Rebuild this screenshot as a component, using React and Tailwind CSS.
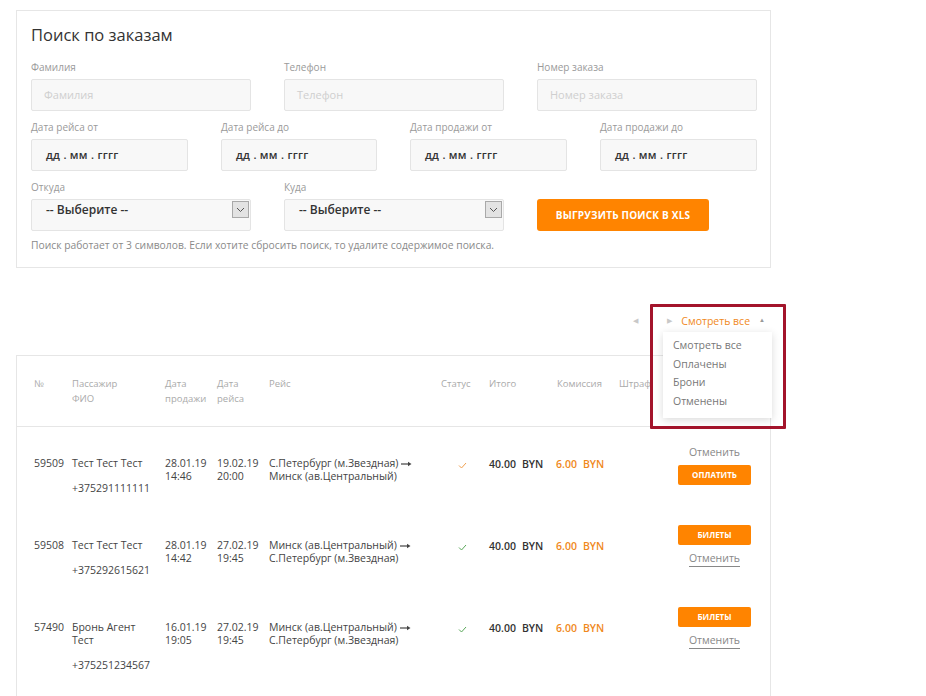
import React from 'react';

const font = { fontFamily: '"Open Sans", "Liberation Sans", sans-serif' };

const rows = [
  {
    id: '59509',
    name: ['Тест Тест Тест'],
    phone: '+375291111111',
    sale: ['28.01.19', '14:46'],
    flight: ['19.02.19', '20:00'],
    route: ['С.Петербург (м.Звездная) →', 'Минск (ав.Центральный)'],
    paid: false,
  },
  {
    id: '59508',
    name: ['Тест Тест Тест'],
    phone: '+375292615621',
    sale: ['28.01.19', '14:42'],
    flight: ['27.02.19', '19:45'],
    route: ['Минск (ав.Центральный) →', 'С.Петербург (м.Звездная)'],
    paid: true,
  },
  {
    id: '57490',
    name: ['Бронь Агент', 'Тест'],
    phone: '+375251234567',
    sale: ['16.01.19', '19:05'],
    flight: ['27.02.19', '19:45'],
    route: ['Минск (ав.Центральный) →', 'С.Петербург (м.Звездная)'],
    paid: true,
  },
];

const Label = ({ children }) => (
  <div className="text-[10px] leading-[14px] text-[#9a9a9a] mb-[5px]">{children}</div>
);

const TextInput = ({ placeholder }) => (
  <div className="h-[32px] bg-[#f8f8f8] border border-[#e4e4e4] rounded-[2px] flex items-center px-[12px] text-[11px] text-[#cfcfcf]">
    {placeholder}
  </div>
);

const DateInput = () => (
  <div className="h-[32px] bg-[#f8f8f8] border border-[#e4e4e4] rounded-[2px] flex items-center pl-[14px] text-[11px] font-semibold text-[#333] tracking-[0.3px]">
    дд . мм . гггг
  </div>
);

const Select = () => (
  <div className="h-[32px] bg-[#f8f8f8] border border-[#e4e4e4] rounded-[2px] flex items-start justify-between pl-[14px] pr-[1px] pt-[1px]">
    <span className="text-[12px] font-semibold text-[#333] leading-[18px]">-- Выберите --</span>
    <span className="w-[17px] h-[17px] bg-[#e3e3e3] border border-[#a9a9a9] flex items-center justify-center">
      <svg width="9" height="6" viewBox="0 0 9 6">
        <path d="M1 1l3.5 3.5L8 1" fill="none" stroke="#555" strokeWidth="1" />
      </svg>
    </span>
  </div>
);

const Check = ({ color }) => (
  <svg width="9" height="7" viewBox="0 0 9 7">
    <path d="M1 3.5l2.5 2.5L8 1" fill="none" stroke={color} strokeWidth="1" />
  </svg>
);

const Arrow = () => (
  <svg width="11" height="6" viewBox="0 0 11 6" className="inline-block ml-[3px] align-middle">
    <path d="M0 3h9" stroke="#444" strokeWidth="1.2" />
    <path d="M7 0.8L10.5 3 7 5.2z" fill="#444" />
  </svg>
);

const App = () => {
  return (
    <div className="bg-white min-h-[696px] pl-[16px] pt-[10px] text-[#333]" style={font}>
      <div className="w-[755px] border border-[#e6e6e6] px-[14px] pt-[13px] pb-[15px]">
        <h1 className="text-[16.5px] leading-[22px] text-[#333] mb-[14px]">Поиск по заказам</h1>

        <div className="grid grid-cols-[220px_220px_220px] gap-x-[33px]">
          <div>
            <Label>Фамилия</Label>
            <TextInput placeholder="Фамилия" />
          </div>
          <div>
            <Label>Телефон</Label>
            <TextInput placeholder="Телефон" />
          </div>
          <div>
            <Label>Номер заказа</Label>
            <TextInput placeholder="Номер заказа" />
          </div>
        </div>

        <div className="grid grid-cols-[157px_156px_157px_157px] gap-x-[33px] mt-[9px]">
          <div>
            <Label>Дата рейса от</Label>
            <DateInput />
          </div>
          <div>
            <Label>Дата рейса до</Label>
            <DateInput />
          </div>
          <div>
            <Label>Дата продажи от</Label>
            <DateInput />
          </div>
          <div>
            <Label>Дата продажи до</Label>
            <DateInput />
          </div>
        </div>

        <div className="grid grid-cols-[220px_220px_172px] gap-x-[33px] mt-[9px] items-end">
          <div>
            <Label>Откуда</Label>
            <Select />
          </div>
          <div>
            <Label>Куда</Label>
            <Select />
          </div>
          <button className="h-[32px] bg-[#ff8400] rounded-[3px] text-white text-[10px] font-bold tracking-[0.2px]">
            ВЫГРУЗИТЬ ПОИСК В XLS
          </button>
        </div>

        <div className="text-[10.3px] leading-[14px] text-[#8a8a8a] mt-[7px]">
          Поиск работает от 3 символов. Если хотите сбросить поиск, то удалите содержимое поиска.
        </div>
      </div>

      <div className="w-[770px] flex justify-end items-center h-[87px] pt-[20px] relative">
        <div className="flex items-center text-[10.5px] mr-[21px]">
          <span className="text-[#c8c8c8] text-[7px] mr-[29px]">◀</span>
          <span className="text-[#c8c8c8] text-[7px] mr-[9px]">▶</span>
          <span className="text-[#f0891c]">Смотреть все</span>
          <span className="text-[#999] text-[6px] ml-[9px] -mt-[2px]">▲</span>
        </div>

        <div className="absolute left-[634px] top-[36px] w-[136px] h-[125px] border-[3px] border-[#a3142b] rounded-[1px] z-10">
          <div className="absolute left-[10px] top-[25px] w-[109px] h-[86px] bg-white shadow-[0_2px_8px_rgba(0,0,0,0.15)] pt-[4px] pl-[10px] text-[10.5px] leading-[18.5px] text-[#777]">
            <div>Смотреть все</div>
            <div>Оплачены</div>
            <div>Брони</div>
            <div>Отменены</div>
          </div>
        </div>
      </div>

      <div className="w-[755px] border-l border-t border-r border-[#e6e6e6] h-[345px]">
        <div className="flex items-start h-[71px] border-b border-[#e6e6e6] pt-[20px] pl-[17px] text-[9.5px] leading-[15px] text-[#aaa]">
          <div className="w-[38px]">№</div>
          <div className="w-[93px]">Пассажир<br />ФИО</div>
          <div className="w-[52px]">Дата<br />продажи</div>
          <div className="w-[52px]">Дата<br />рейса</div>
          <div className="w-[172px]">Рейс</div>
          <div className="w-[48px]">Статус</div>
          <div className="w-[68px]">Итого</div>
          <div className="w-[62px]">Комиссия</div>
          <div className="w-[59px]">Штраф</div>
        </div>

        {rows.map((r, i) => (
          <div key={r.id} className="flex items-start h-[82px] pl-[17px] text-[10.5px] leading-[12.5px] text-[#444]">
            <div className="w-[38px] pt-[30px]">{r.id}</div>
            <div className="w-[93px] pt-[30px]">
              {r.name.map((n) => (
                <div key={n}>{n}</div>
              ))}
              <div className="mt-[12.5px]">{r.phone}</div>
            </div>
            <div className="w-[52px] pt-[30px]">
              <div>{r.sale[0]}</div>
              <div>{r.sale[1]}</div>
            </div>
            <div className="w-[52px] pt-[30px]">
              <div>{r.flight[0]}</div>
              <div>{r.flight[1]}</div>
            </div>
            <div className="w-[172px] pt-[30px] whitespace-nowrap">
              <div>
                {r.route[0].replace(' →', '')}
                <Arrow />
              </div>
              <div>{r.route[1]}</div>
            </div>
            <div className="w-[48px] pt-[35px] pl-[17px]">
              <Check color={r.paid ? '#5aa85a' : '#f0a050'} />
            </div>
            <div className="w-[67px] pt-[31px] font-semibold text-[#333]">
              40.00<span className="ml-[6px]">BYN</span>
            </div>
            <div className="w-[62px] pt-[31px] font-semibold text-[#f0891c]">
              6.00<span className="ml-[6px]">BYN</span>
            </div>
            <div className="w-[60px]" />
            <div className="w-[73px] flex flex-col items-center">
              {i === 0 ? (
                <>
                  <div className="mt-[19px] text-[10.5px] leading-[12px] text-[#888]">Отменить</div>
                  <button className="mt-[7px] w-[73px] h-[20px] bg-[#ff8400] rounded-[2px] text-white text-[8px] font-bold">
                    ОПЛАТИТЬ
                  </button>
                </>
              ) : (
                <>
                  <button className="mt-[16px] w-[73px] h-[20px] bg-[#ff8400] rounded-[2px] text-white text-[8px] font-bold">
                    БИЛЕТЫ
                  </button>
                  <div className="mt-[7px] text-[10.5px] leading-[13px] text-[#888] border-b border-[#888] pb-[1px]">Отменить</div>
                </>
              )}
            </div>
          </div>
        ))}
      </div>
    </div>
  );
};

export default App;
